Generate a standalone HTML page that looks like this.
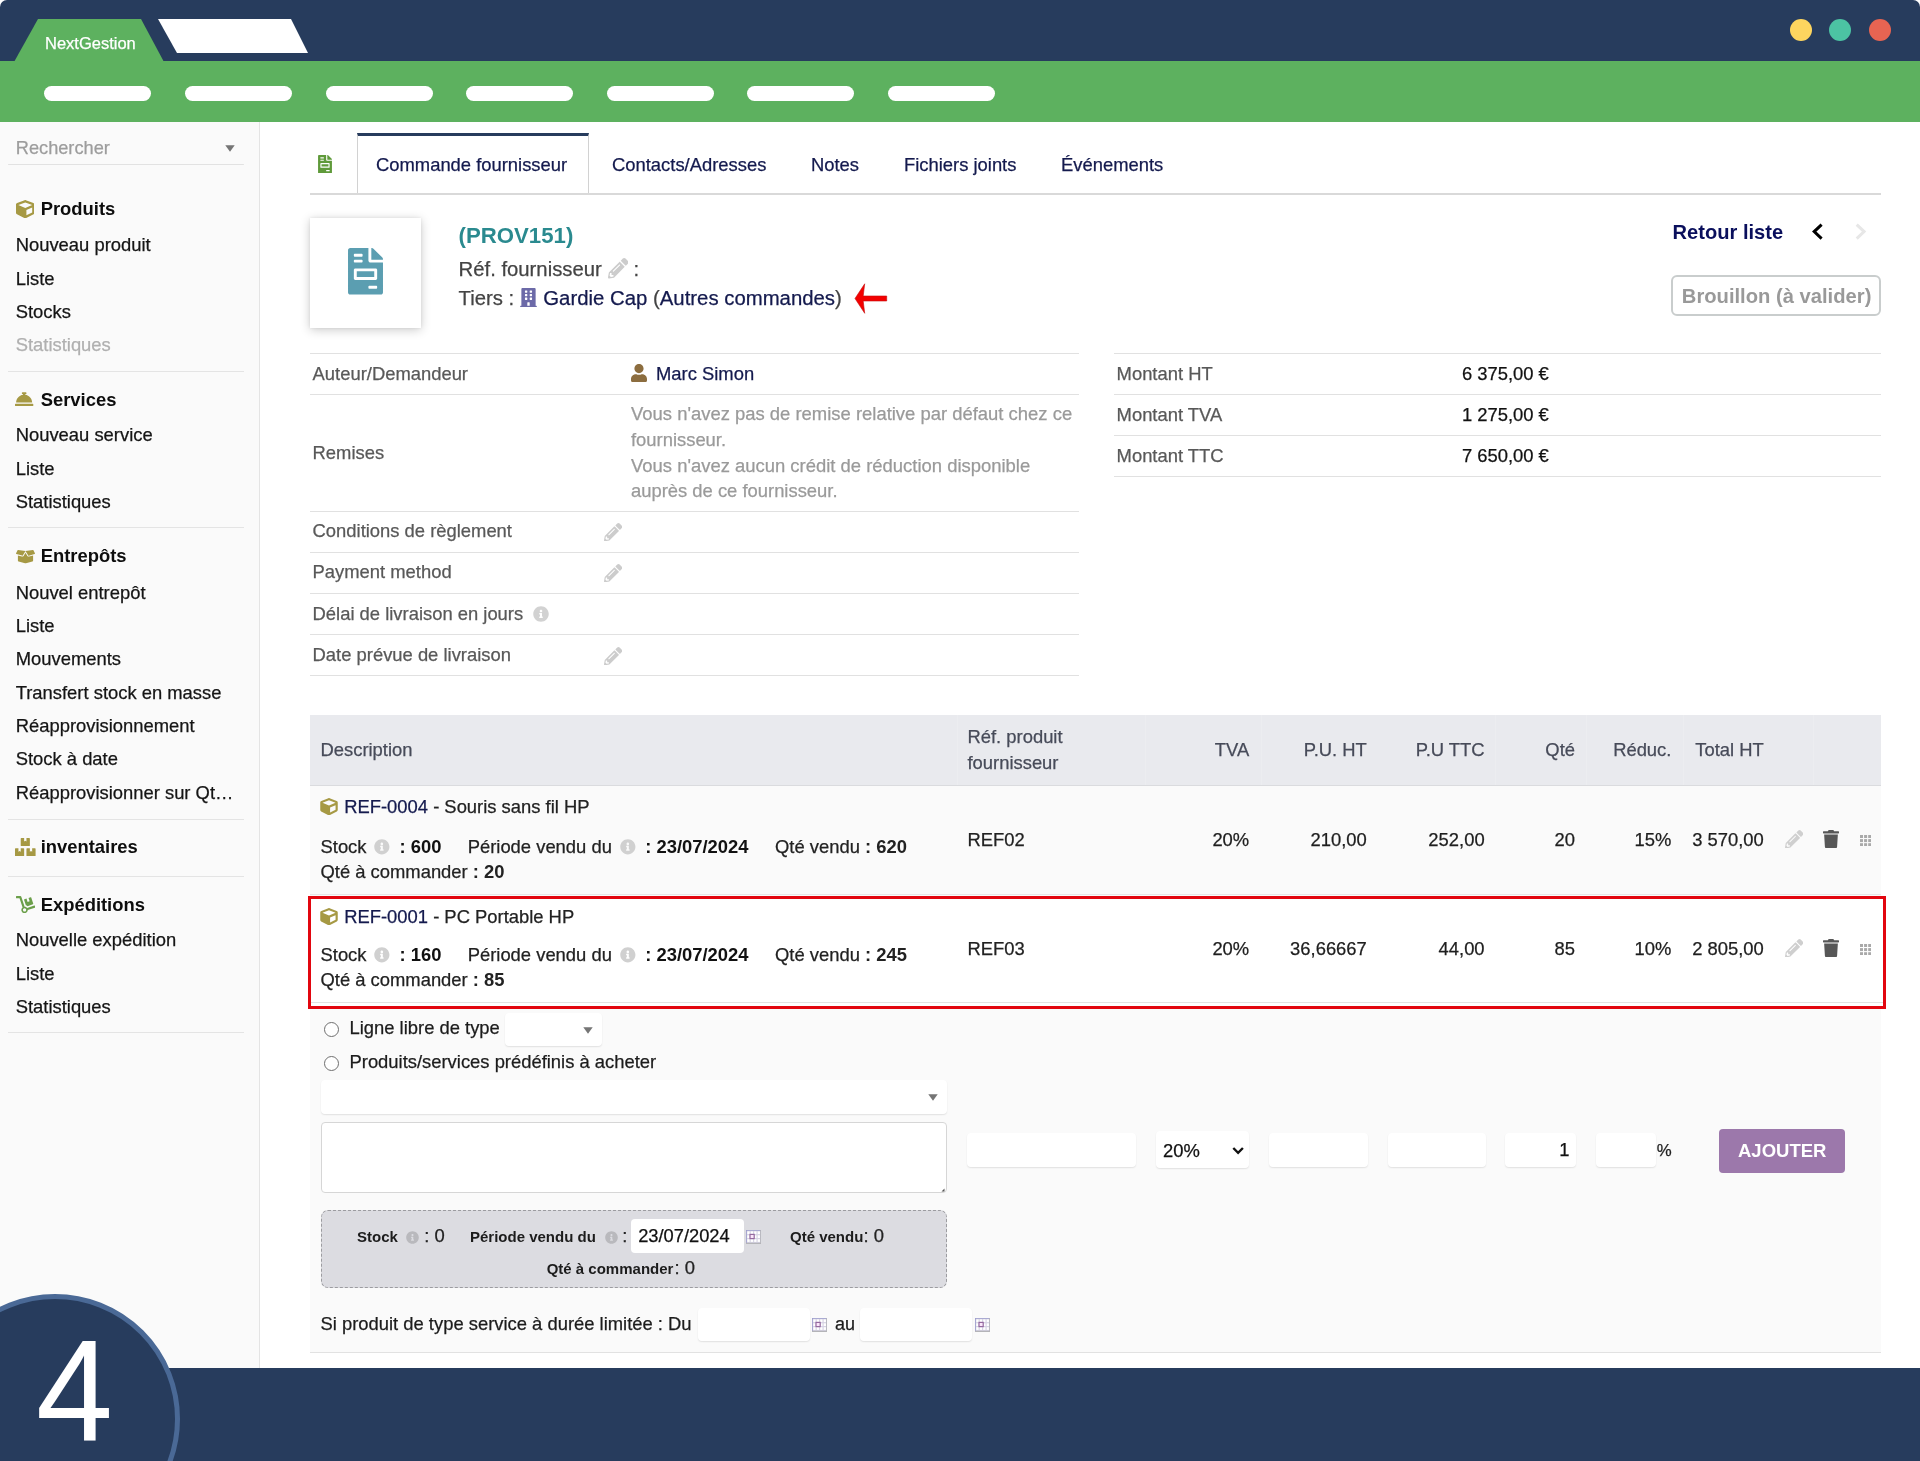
<!DOCTYPE html>
<html lang="fr">
<head>
<meta charset="utf-8">
<title>NextGestion - Commande fournisseur</title>
<style>
*{box-sizing:border-box;margin:0;padding:0}
html,body{width:1920px;height:1461px;overflow:hidden;background:#fff}
body{font-family:"Liberation Sans",Arial,sans-serif;font-size:18.4px;color:#222;position:relative}
.abs{position:absolute}
.t{-webkit-text-stroke:.25px;position:absolute;white-space:nowrap;line-height:24px;height:24px}
#win{will-change:transform;position:absolute;left:0;top:0;width:1920px;height:1461px;overflow:hidden;border-radius:7px 7px 0 0;background:#fff}
#navy{position:absolute;left:0;top:0;width:1920px;height:62px;background:#273c5d}
#green{position:absolute;left:0;top:61px;width:1920px;height:61px;background:#5db15f}
.pill{position:absolute;top:86px;height:15px;width:107px;border-radius:8px;background:#fff}
.dot{position:absolute;top:19px;width:22px;height:22px;border-radius:50%}
#side{position:absolute;left:0;top:122px;width:260px;height:1246px;background:#fafafa;border-right:1px solid #e4e4e4}
.sep{position:absolute;left:8px;width:236px;height:1px;background:#e2e2e2}
.sh{position:absolute;left:41px;font-weight:700;color:#111;white-space:nowrap;line-height:24px}
.si{position:absolute;left:16px;color:#1c1c1c;white-space:nowrap;line-height:24px}
.ico{position:absolute}
#bottom{position:absolute;left:0;top:1368px;width:1920px;height:93px;background:#273c5d}
#circle{position:absolute;left:-70.5px;top:1293.7px;width:250.6px;height:250.6px;border-radius:50%;background:#273c5d;border:5px solid #4a6996}
#four{position:absolute;left:36.3px;top:1311.2px;font-size:144.3px;line-height:160px;color:#fff;transform:scaleX(.959);transform-origin:0 0}
.hl{position:absolute;height:1px;background:#dcdcdc}
.lab{color:#595959}
.lnk{color:#141a4e}
.mut{color:#9a9a9a}
.b{font-weight:700}
.t.b,.t b{-webkit-text-stroke:0}
.r{text-align:right}
.inp{position:absolute;background:#fff;border-bottom:1px solid #e0e0e0;border-radius:3px}
</style>
</head>
<body>
<div id="win">
<div id="navy"></div>
<div id="green"></div>
<svg class="abs" style="left:0;top:0" width="340" height="62" viewBox="0 0 340 62">
<polygon points="14,62 38,19 141,19 164,62" fill="#5db15f"/>
<polygon points="158,19 291,19 308,53 177,53" fill="#fff"/>
</svg>
<div class="t" style="left:45px;top:31px;font-size:16.5px;color:#fff">NextGestion</div>
<div class="dot" style="left:1790px;background:#fdd55f"></div>
<div class="dot" style="left:1829px;background:#4cc3a3"></div>
<div class="dot" style="left:1869px;background:#e76452"></div>
<div class="pill" style="left:44px"></div>
<div class="pill" style="left:185px"></div>
<div class="pill" style="left:326px"></div>
<div class="pill" style="left:466px"></div>
<div class="pill" style="left:607px"></div>
<div class="pill" style="left:747px"></div>
<div class="pill" style="left:888px"></div>

<!-- SIDEBAR -->
<div id="side"></div>
<div class="t " style="left:15.8px;top:136px;line-height:24px;height:24px;font-size:18.2px;color:#9d9d9d">Rechercher</div>
<svg class="ico" style="left:225px;top:145px" width="10" height="7" viewBox="0 0 10 7"><path d="M0.300 0.300H9.700L5 6.700Z" fill="#757575"/></svg>
<div class="abs" style="left:8px;top:163.5px;width:236px;height:1.5px;background:#e2e2e2;border-radius:1px"></div>
<svg class="ico" style="left:15.5px;top:199.8px" width="18.5" height="18.5" viewBox="0 0 512 512" ><path fill="#a69944" d="M239.1 6.3l-208 78c-18.7 7-31.1 25-31.1 45v225.1c0 18.2 10.3 34.800 26.500 42.900l208 104c13.500 6.800 29.400 6.800 42.900 0l208-104c16.300-8.100 26.500-24.800 26.500-42.900V129.300c0-20-12.400-37.900-31.100-44.900l-208-78C262 2.200 250 2.200 239.100 6.300zM256 68.400l192 72v1.100l-192 78-192-78v-1.100l192-72zm32 356V275.500l160-65v133.900l-160 80z"/></svg><div class="t b" style="left:40.7px;top:196px;line-height:25px;height:25px;color:#0d0d0d">Produits</div>
<div class="t " style="left:15.7px;top:232px;line-height:25px;height:25px;color:#151515">Nouveau produit</div>
<div class="t " style="left:15.7px;top:266px;line-height:25px;height:25px;color:#151515">Liste</div>
<div class="t " style="left:15.7px;top:299px;line-height:25px;height:25px;color:#151515">Stocks</div>
<div class="t " style="left:15.7px;top:332px;line-height:25px;height:25px;color:#b0b0b0">Statistiques</div>
<div class="abs" style="left:8px;top:370.7px;width:236px;height:1.4px;background:#e4e4e4"></div>
<svg class="ico" style="left:15.4px;top:390px" width="18.3" height="18.3" viewBox="0 0 512 512" ><path fill="#a69944" d="M288 130.540V112h16c8.840 0 16-7.160 16-16V80c0-8.840-7.160-16-16-16h-96c-8.840 0-16 7.160-16 16v16c0 8.840 7.160 16 16 16h16v18.540C115.490 146.110 32 239.180 32 352h448c0-112.820-83.490-205.890-192-221.460zM496 384H16c-8.840 0-16 7.160-16 16v32c0 8.840 7.160 16 16 16h480c8.840 0 16-7.160 16-16v-32c0-8.840-7.160-16-16-16z"/></svg><div class="t b" style="left:40.7px;top:387px;line-height:25px;height:25px;color:#0d0d0d">Services</div>
<div class="t " style="left:15.7px;top:422px;line-height:25px;height:25px;color:#151515">Nouveau service</div>
<div class="t " style="left:15.7px;top:456px;line-height:25px;height:25px;color:#151515">Liste</div>
<div class="t " style="left:15.7px;top:489px;line-height:25px;height:25px;color:#151515">Statistiques</div>
<div class="abs" style="left:8px;top:527px;width:236px;height:1.4px;background:#e4e4e4"></div>
<svg class="ico" style="left:15.5px;top:549px" width="19" height="15.2" viewBox="0 0 640 512" ><path fill="#a69944" d="M425.700 256c-16.900 0-32.800-9-41.400-23.400L320 126l-64.200 106.600c-8.700 14.500-24.600 23.500-41.500 23.500-4.500 0-9-.6-13.300-1.900L64 215v178c0 14.700 10 27.500 24.200 31l216.200 54.100c10.200 2.500 20.900 2.500 31 0L551.800 424c14.200-3.600 24.200-16.400 24.200-31V215l-137 39.100c-4.300 1.300-8.800 1.900-13.300 1.900zm212.600-112.200L586.800 41c-3.100-6.200-9.800-9.800-16.700-8.900L320 64l91.700 152.100c3.800 6.300 11.400 9.300 18.500 7.300l197.900-56.500c9.900-2.900 14.700-13.900 10.200-23.100zM53.200 41L1.700 143.800c-4.600 9.200.3 20.200 10.100 23l197.900 56.500c7.100 2 14.700-1 18.500-7.300L320 64 69.800 32.100c-6.900-.8-13.500 2.700-16.600 8.900z"/></svg><div class="t b" style="left:40.7px;top:543px;line-height:25px;height:25px;color:#0d0d0d">Entrepôts</div>
<div class="t " style="left:15.7px;top:580px;line-height:25px;height:25px;color:#151515">Nouvel entrepôt</div>
<div class="t " style="left:15.7px;top:613px;line-height:25px;height:25px;color:#151515">Liste</div>
<div class="t " style="left:15.7px;top:646px;line-height:25px;height:25px;color:#151515">Mouvements</div>
<div class="t " style="left:15.7px;top:680px;line-height:25px;height:25px;color:#151515">Transfert stock en masse</div>
<div class="t " style="left:15.7px;top:713px;line-height:25px;height:25px;color:#151515">Réapprovisionnement</div>
<div class="t " style="left:15.7px;top:746px;line-height:25px;height:25px;color:#151515">Stock à date</div>
<div class="t " style="left:15.7px;top:780px;line-height:25px;height:25px;color:#151515">Réapprovisionner sur Qt…</div>
<div class="abs" style="left:8px;top:818.5px;width:236px;height:1.4px;background:#e4e4e4"></div>
<svg class="ico" style="left:15.4px;top:837.7px" width="20.6" height="18.3" viewBox="0 0 576 512" ><path fill="#a69944" d="M560 288h-80v96l-32-21.300-32 21.300v-96h-80c-8.800 0-16 7.200-16 16v192c0 8.800 7.200 16 16 16h224c8.800 0 16-7.200 16-16V304c0-8.800-7.200-16-16-16zm-384-64h224c8.800 0 16-7.200 16-16V16c0-8.800-7.200-16-16-16h-80v96l-32-21.300L256 96V0h-80c-8.800 0-16 7.200-16 16v192c0 8.800 7.200 16 16 16zm64 64h-80v96l-32-21.300L96 384v-96H16c-8.800 0-16 7.200-16 16v192c0 8.800 7.200 16 16 16h224c8.800 0 16-7.200 16-16V304c0-8.800-7.200-16-16-16z"/></svg><div class="t b" style="left:40.7px;top:834px;line-height:25px;height:25px;color:#0d0d0d">inventaires</div>
<div class="abs" style="left:8px;top:875.6px;width:236px;height:1.4px;background:#e4e4e4"></div>
<svg class="ico" style="left:15.6px;top:896.1px" width="19.3" height="17.2" viewBox="0 0 576 512" ><path fill="#6b9f4a" d="M294.200 277.700c18 5 34.700 13.400 49.500 24.700l161.500-53.800c8.400-2.800 12.900-11.900 10.100-20.200L454.900 47.200c-2.800-8.400-11.900-12.900-20.200-10.100l-61.100 20.400 33.100 99.400L346 177l-33.100-99.400-61.600 20.500c-8.400 2.800-12.900 11.900-10.100 20.200l53 159.400zm281 48.700L565 296c-2.800-8.400-11.900-12.900-20.200-10.100l-213.500 71.200c-17.200-22-43.600-36.400-73.500-37L158.400 21.900C154 8.800 141.800 0 128 0H16C7.200 0 0 7.200 0 16v32c0 8.800 7.200 16 16 16h88.900l92.200 276.700c-26.100 20.400-41.700 53.600-36 90.500 6.100 39.400 37.900 72.300 77.300 79.200 60.200 10.700 112.300-34.800 113.400-92.600l213.300-71.200c8.300-2.800 12.900-11.800 10.100-20.200zM256 464c-26.500 0-48-21.500-48-48s21.500-48 48-48 48 21.500 48 48-21.500 48-48 48z"/></svg><div class="t b" style="left:40.7px;top:892px;line-height:25px;height:25px;color:#0d0d0d">Expéditions</div>
<div class="t " style="left:15.7px;top:927px;line-height:25px;height:25px;color:#151515">Nouvelle expédition</div>
<div class="t " style="left:15.7px;top:961px;line-height:25px;height:25px;color:#151515">Liste</div>
<div class="t " style="left:15.7px;top:994px;line-height:25px;height:25px;color:#151515">Statistiques</div>
<div class="abs" style="left:8px;top:1032px;width:236px;height:1.4px;background:#e4e4e4"></div>


<!-- MAIN -->
<div class="abs" style="left:356.5px;top:133px;width:232.5px;height:61px;background:#fff;border-left:1px solid #d2d2d2;border-right:1px solid #d2d2d2;border-top:3.5px solid #273c5d"></div>
<div class="abs" style="left:310px;top:193px;width:1571px;height:1.7px;background:#d9d9d9"></div>
<svg class="ico" style="left:317.5px;top:154.7px" width="14" height="18.5" viewBox="0 0 384 512" ><path fill="#5f9a3a" d="M288 256H96v64h192v-64zm89-151L279.100 7c-4.500-4.500-10.600-7-17-7H256v128h128v-6.100c0-6.300-2.500-12.400-7-16.900zm-153 31V0H24C10.700 0 0 10.700 0 24v464c0 13.300 10.700 24 24 24h336c13.300 0 24-10.700 24-24V160H248c-13.200 0-24-10.800-24-24zM64 72c0-4.420 3.580-8 8-8h80c4.420 0 8 3.580 8 8v16c0 4.420-3.580 8-8 8H72c-4.420 0-8-3.580-8-8V72zm0 64c0-4.420 3.580-8 8-8h80c4.420 0 8 3.580 8 8v16c0 4.420-3.580 8-8 8H72c-4.420 0-8-3.580-8-8v-16zm256 304c0 4.420-3.580 8-8 8h-80c-4.420 0-8-3.580-8-8v-16c0-4.420 3.580-8 8-8h80c4.420 0 8 3.580 8 8v16zm0-200v96c0 8.840-7.160 16-16 16H80c-8.840 0-16-7.160-16-16v-96c0-8.840 7.160-16 16-16h224c8.840 0 16 7.160 16 16z"/></svg><div class="t lnk" style="left:376px;top:152px;line-height:25px;height:25px;">Commande fournisseur</div>
<div class="t lnk" style="left:612px;top:152px;line-height:25px;height:25px;">Contacts/Adresses</div>
<div class="t lnk" style="left:811px;top:152px;line-height:25px;height:25px;">Notes</div>
<div class="t lnk" style="left:904px;top:152px;line-height:25px;height:25px;">Fichiers joints</div>
<div class="t lnk" style="left:1061px;top:152px;line-height:25px;height:25px;">Événements</div>
<div class="abs" style="left:310.4px;top:217.7px;width:110.4px;height:110px;background:#fff;box-shadow:0 2px 10px rgba(0,0,0,.2),0 0 3px rgba(0,0,0,.08)"></div>
<svg class="ico" style="left:348px;top:248.3px" width="35" height="46.6" viewBox="0 0 384 512" ><path fill="#5b9eb1" d="M288 256H96v64h192v-64zm89-151L279.100 7c-4.500-4.500-10.600-7-17-7H256v128h128v-6.100c0-6.300-2.500-12.400-7-16.900zm-153 31V0H24C10.700 0 0 10.700 0 24v464c0 13.300 10.700 24 24 24h336c13.300 0 24-10.700 24-24V160H248c-13.200 0-24-10.800-24-24zM64 72c0-4.420 3.580-8 8-8h80c4.420 0 8 3.580 8 8v16c0 4.420-3.580 8-8 8H72c-4.420 0-8-3.580-8-8V72zm0 64c0-4.420 3.580-8 8-8h80c4.420 0 8 3.580 8 8v16c0 4.420-3.580 8-8 8H72c-4.420 0-8-3.580-8-8v-16zm256 304c0 4.420-3.580 8-8 8h-80c-4.420 0-8-3.580-8-8v-16c0-4.420 3.580-8 8-8h80c4.420 0 8 3.580 8 8v16zm0-200v96c0 8.840-7.160 16-16 16H80c-8.840 0-16-7.160-16-16v-96c0-8.840 7.160-16 16-16h224c8.840 0 16 7.160 16 16z"/></svg><div class="t b" style="left:458.6px;top:221px;line-height:29px;height:29px;font-size:22.2px;color:#2a8a8f">(PROV151)</div>
<div class="t " style="left:458.6px;top:256px;line-height:26px;height:26px;font-size:20.3px;color:#444">Réf. fournisseur</div>
<svg class="ico" style="left:607.5px;top:258.4px" width="20.5" height="20.5" viewBox="0 0 512 512" ><path fill="#cccccc" d="M497.900 142.100l-46.100 46.100c-4.700 4.700-12.300 4.700-17 0l-111-111c-4.700-4.700-4.700-12.300 0-17l46.100-46.100c18.700-18.700 49.100-18.700 67.900 0l60.100 60.100c18.800 18.700 18.800 49.100 0 67.900zM284.200 99.800L21.600 362.400.4 483.900c-2.900 16.400 11.400 30.600 27.800 27.800l121.500-21.300 262.600-262.600c4.700-4.700 4.700-12.300 0-17l-111-111c-4.800-4.700-12.400-4.700-17.100 0zM124.100 339.900c-5.500-5.500-5.500-14.300 0-19.800l154-154c5.500-5.500 14.300-5.500 19.800 0s5.500 14.300 0 19.800l-154 154c-5.500 5.500-14.300 5.500-19.800 0zM88 424h48v36.300l-64.500 11.300-31.100-31.100L51.700 376H88v48z"/></svg><div class="t " style="left:633.5px;top:256px;line-height:26px;height:26px;font-size:20.3px;color:#444">:</div>
<div class="t " style="left:458.6px;top:285px;line-height:26px;height:26px;font-size:20.3px;color:#444">Tiers :</div>
<svg class="ico" style="left:520.3px;top:287.5px" width="17" height="19" viewBox="0 0 448 512" ><path fill="#6c6aa8" d="M436 480h-20V24c0-13.255-10.745-24-24-24H56C42.745 0 32 10.745 32 24v456H12c-6.627 0-12 5.373-12 12v20h448v-20c0-6.627-5.373-12-12-12zM128 76c0-6.627 5.373-12 12-12h40c6.627 0 12 5.373 12 12v40c0 6.627-5.373 12-12 12h-40c-6.627 0-12-5.373-12-12V76zm0 96c0-6.627 5.373-12 12-12h40c6.627 0 12 5.373 12 12v40c0 6.627-5.373 12-12 12h-40c-6.627 0-12-5.373-12-12v-40zm52 148h-40c-6.627 0-12-5.373-12-12v-40c0-6.627 5.373-12 12-12h40c6.627 0 12 5.373 12 12v40c0 6.627-5.373 12-12 12zm76 160h-64v-84c0-6.627 5.373-12 12-12h40c6.627 0 12 5.373 12 12v84zm64-172c0 6.627-5.373 12-12 12h-40c-6.627 0-12-5.373-12-12v-40c0-6.627 5.373-12 12-12h40c6.627 0 12 5.373 12 12v40zm0-96c0 6.627-5.373 12-12 12h-40c-6.627 0-12-5.373-12-12v-40c0-6.627 5.373-12 12-12h40c6.627 0 12 5.373 12 12v40zm0-96c0 6.627-5.373 12-12 12h-40c-6.627 0-12-5.373-12-12V76c0-6.627 5.373-12 12-12h40c6.627 0 12 5.373 12 12v40z"/></svg><div class="t " style="left:543.3px;top:285px;line-height:26px;height:26px;font-size:20.35px;color:#444"><span class="lnk">Gardie Cap</span> (<span class="lnk">Autres commandes</span>)</div>
<svg class="ico" style="left:850px;top:280px" width="42" height="38" viewBox="850 280 42 38"><path d="M855 298.500L864.700 283.800L863.200 296L886.700 296L886.700 301L863.200 301L864.700 313.300Z" fill="#f30000" stroke="#c40d0d" stroke-width="0.600"/></svg>
<div class="t b" style="left:1672.6px;top:219px;line-height:26px;height:26px;font-size:20.1px;color:#0a0f5c">Retour liste</div>
<svg class="ico" style="left:1808px;top:220px" width="64" height="24" viewBox="1808 220 64 24"><path d="M1821.600 224.600L1814.200 231.600L1821.600 238.600" fill="none" stroke="#000" stroke-width="3"/><path d="M1856.700 224.600L1864.100 231.600L1856.700 238.600" fill="none" stroke="#e7e7e7" stroke-width="3"/></svg>
<div class="abs" style="left:1671.2px;top:275px;width:209.8px;height:40.6px;border:2px solid #c9cdcd;border-radius:6px;background:#fff"></div>
<div class="t b" style="left:1681.8px;top:283px;line-height:26px;height:26px;font-size:20.2px;color:#999">Brouillon (à valider)</div>
<div class="hl" style="left:310px;top:352.79999999999995px;width:769px;background:#e1e1e1;height:1.3px"></div>
<div class="hl" style="left:310px;top:393.9px;width:769px;background:#e1e1e1;height:1.3px"></div>
<div class="hl" style="left:310px;top:510.59999999999997px;width:769px;background:#e1e1e1;height:1.3px"></div>
<div class="hl" style="left:310px;top:551.6999999999999px;width:769px;background:#e1e1e1;height:1.3px"></div>
<div class="hl" style="left:310px;top:592.5px;width:769px;background:#e1e1e1;height:1.3px"></div>
<div class="hl" style="left:310px;top:633.8px;width:769px;background:#e1e1e1;height:1.3px"></div>
<div class="hl" style="left:310px;top:675.0px;width:769px;background:#e1e1e1;height:1.3px"></div>
<div class="t lab" style="left:312.6px;top:361px;line-height:25px;height:25px;">Auteur/Demandeur</div>
<svg class="ico" style="left:631.3px;top:364px" width="16" height="18.3" viewBox="0 0 448 512" ><path fill="#8c6d3f" d="M224 256c70.700 0 128-57.300 128-128S294.700 0 224 0 96 57.300 96 128s57.300 128 128 128zm89.600 32h-16.700c-22.200 10.200-46.900 16-72.900 16s-50.600-5.800-72.900-16h-16.700C60.200 288 0 348.200 0 422.400V464c0 26.500 21.500 48 48 48h352c26.500 0 48-21.500 48-48v-41.600c0-74.200-60.200-134.400-134.400-134.400z"/></svg><div class="t lnk" style="left:656px;top:361px;line-height:25px;height:25px;">Marc Simon</div>
<div class="t lab" style="left:312.6px;top:440px;line-height:25px;height:25px;">Remises</div>
<div class="t mut" style="left:631px;top:401px;line-height:25px;height:25px;font-size:18.45px;">Vous n'avez pas de remise relative par défaut chez ce</div>
<div class="t mut" style="left:631px;top:427px;line-height:25px;height:25px;">fournisseur.</div>
<div class="t mut" style="left:631px;top:453px;line-height:25px;height:25px;font-size:18.45px;">Vous n'avez aucun crédit de réduction disponible</div>
<div class="t mut" style="left:631px;top:478px;line-height:25px;height:25px;">auprès de ce fournisseur.</div>
<div class="t lab" style="left:312.6px;top:518px;line-height:25px;height:25px;">Conditions de règlement</div>
<svg class="ico" style="left:604.1px;top:522.8px" width="18.3" height="18.3" viewBox="0 0 512 512" ><path fill="#cccccc" d="M497.900 142.100l-46.100 46.100c-4.700 4.700-12.300 4.700-17 0l-111-111c-4.700-4.700-4.700-12.300 0-17l46.100-46.100c18.700-18.700 49.100-18.700 67.900 0l60.100 60.100c18.800 18.700 18.800 49.100 0 67.900zM284.200 99.800L21.600 362.400.4 483.900c-2.900 16.400 11.400 30.600 27.800 27.800l121.500-21.300 262.600-262.600c4.700-4.700 4.700-12.300 0-17l-111-111c-4.800-4.700-12.400-4.700-17.100 0zM124.100 339.900c-5.500-5.500-5.500-14.300 0-19.800l154-154c5.500-5.500 14.300-5.500 19.800 0s5.500 14.300 0 19.800l-154 154c-5.500 5.500-14.300 5.500-19.800 0zM88 424h48v36.300l-64.500 11.300-31.100-31.100L51.700 376H88v48z"/></svg><div class="t lab" style="left:312.6px;top:559px;line-height:25px;height:25px;">Payment method</div>
<svg class="ico" style="left:604.1px;top:564px" width="18.3" height="18.3" viewBox="0 0 512 512" ><path fill="#cccccc" d="M497.900 142.100l-46.100 46.100c-4.700 4.700-12.300 4.700-17 0l-111-111c-4.700-4.700-4.700-12.300 0-17l46.100-46.100c18.700-18.700 49.100-18.700 67.900 0l60.100 60.100c18.800 18.700 18.800 49.100 0 67.900zM284.200 99.800L21.600 362.400.4 483.900c-2.900 16.400 11.400 30.600 27.800 27.800l121.500-21.300 262.600-262.600c4.700-4.700 4.700-12.300 0-17l-111-111c-4.800-4.700-12.400-4.700-17.100 0zM124.100 339.900c-5.500-5.500-5.500-14.300 0-19.800l154-154c5.500-5.500 14.300-5.500 19.800 0s5.500 14.300 0 19.800l-154 154c-5.500 5.500-14.300 5.500-19.800 0zM88 424h48v36.300l-64.500 11.300-31.100-31.100L51.700 376H88v48z"/></svg><div class="t lab" style="left:312.6px;top:601px;line-height:25px;height:25px;">Délai de livraison en jours</div>
<svg class="ico" style="left:533.2px;top:606.2px" width="16" height="16" viewBox="0 0 512 512" ><path fill="#d2d2d2" d="M256 8C119.043 8 8 119.083 8 256c0 136.997 111.043 248 248 248s248-111.003 248-248C504 119.083 392.957 8 256 8zm0 110c23.196 0 42 18.804 42 42s-18.804 42-42 42-42-18.804-42-42 18.804-42 42-42zm56 254c0 6.627-5.373 12-12 12h-88c-6.627 0-12-5.373-12-12v-24c0-6.627 5.373-12 12-12h12v-64h-12c-6.627 0-12-5.373-12-12v-24c0-6.627 5.373-12 12-12h64c6.627 0 12 5.373 12 12v100h12c6.627 0 12 5.373 12 12v24z"/></svg><div class="t lab" style="left:312.6px;top:642px;line-height:25px;height:25px;">Date prévue de livraison</div>
<svg class="ico" style="left:604.1px;top:646.5px" width="18.3" height="18.3" viewBox="0 0 512 512" ><path fill="#cccccc" d="M497.900 142.100l-46.100 46.100c-4.700 4.700-12.300 4.700-17 0l-111-111c-4.700-4.700-4.700-12.300 0-17l46.100-46.100c18.700-18.700 49.100-18.700 67.900 0l60.100 60.100c18.800 18.700 18.800 49.100 0 67.900zM284.200 99.800L21.600 362.400.4 483.900c-2.900 16.400 11.400 30.600 27.800 27.800l121.500-21.300 262.600-262.600c4.700-4.700 4.700-12.300 0-17l-111-111c-4.800-4.700-12.400-4.700-17.100 0zM124.100 339.900c-5.500-5.500-5.500-14.300 0-19.800l154-154c5.500-5.500 14.300-5.500 19.800 0s5.500 14.300 0 19.800l-154 154c-5.500 5.500-14.300 5.500-19.800 0zM88 424h48v36.300l-64.500 11.300-31.100-31.100L51.700 376H88v48z"/></svg><div class="hl" style="left:1113.7px;top:352.9px;width:767.3px;background:#e1e1e1;height:1.3px"></div>
<div class="hl" style="left:1113.7px;top:393.9px;width:767.3px;background:#e1e1e1;height:1.3px"></div>
<div class="hl" style="left:1113.7px;top:434.9px;width:767.3px;background:#e1e1e1;height:1.3px"></div>
<div class="hl" style="left:1113.7px;top:475.9px;width:767.3px;background:#e1e1e1;height:1.3px"></div>
<div class="t lab" style="left:1116.6px;top:361px;line-height:25px;height:25px;">Montant HT</div>
<div class="t lab" style="left:1116.6px;top:402px;line-height:25px;height:25px;">Montant TVA</div>
<div class="t lab" style="left:1116.6px;top:443px;line-height:25px;height:25px;">Montant TTC</div>
<div class="t " style="right:371.20000000000005px;top:361px;line-height:25px;height:25px;color:#111">6 375,00 €</div>
<div class="t " style="right:371.20000000000005px;top:402px;line-height:25px;height:25px;color:#111">1 275,00 €</div>
<div class="t " style="right:371.20000000000005px;top:443px;line-height:25px;height:25px;color:#111">7 650,00 €</div>
<div class="abs" style="left:310px;top:715px;width:1571.2px;height:70.5px;background:#e9eaee"></div>
<div class="abs" style="left:310px;top:785.5px;width:1571.2px;height:110px;background:#fafafa"></div>
<div class="abs" style="left:310px;top:1008px;width:1571.2px;height:344px;background:#fafafa"></div>
<div class="hl" style="left:310px;top:785px;width:1571.2px;background:#dadbde;height:1px"></div>
<div class="hl" style="left:310px;top:894px;width:1571.2px;background:#e6e6e6;height:1px"></div>
<div class="hl" style="left:310px;top:1351.5px;width:1571.2px;background:#e2e2e2;height:1.3px"></div>
<div class="abs" style="left:957px;top:715px;width:1px;height:70px;background:rgba(255,255,255,.15)"></div>
<div class="abs" style="left:1145px;top:715px;width:1px;height:70px;background:rgba(255,255,255,.15)"></div>
<div class="abs" style="left:1260.5px;top:715px;width:1px;height:70px;background:rgba(255,255,255,.15)"></div>
<div class="abs" style="left:1495px;top:715px;width:1px;height:70px;background:rgba(255,255,255,.15)"></div>
<div class="abs" style="left:1586px;top:715px;width:1px;height:70px;background:rgba(255,255,255,.15)"></div>
<div class="abs" style="left:1682.5px;top:715px;width:1px;height:70px;background:rgba(255,255,255,.15)"></div>
<div class="abs" style="left:1813px;top:715px;width:1px;height:70px;background:rgba(255,255,255,.15)"></div>
<div class="t " style="left:320.5px;top:737px;line-height:25px;height:25px;color:#474b59">Description</div>
<div class="t " style="left:967.5px;top:724px;line-height:25px;height:25px;color:#474b59">Réf. produit</div>
<div class="t " style="left:967.5px;top:750px;line-height:25px;height:25px;color:#474b59">fournisseur</div>
<div class="t " style="right:670.8px;top:737px;line-height:25px;height:25px;color:#474b59">TVA</div>
<div class="t " style="right:553.2px;top:737px;line-height:25px;height:25px;color:#474b59">P.U. HT</div>
<div class="t " style="right:435.4000000000001px;top:737px;line-height:25px;height:25px;color:#474b59">P.U TTC</div>
<div class="t " style="right:345px;top:737px;line-height:25px;height:25px;color:#474b59">Qté</div>
<div class="t " style="right:248.5999999999999px;top:737px;line-height:25px;height:25px;color:#474b59">Réduc.</div>
<div class="t " style="right:156.20000000000005px;top:737px;line-height:25px;height:25px;color:#474b59">Total HT</div>
<svg class="ico" style="left:320px;top:797.8px" width="18" height="17.5" viewBox="0 0 512 512" ><path fill="#a69944" d="M239.1 6.3l-208 78c-18.7 7-31.1 25-31.1 45v225.1c0 18.2 10.3 34.800 26.500 42.900l208 104c13.500 6.800 29.400 6.800 42.900 0l208-104c16.300-8.100 26.500-24.800 26.500-42.900V129.300c0-20-12.400-37.900-31.100-44.900l-208-78C262 2.200 250 2.200 239.100 6.300zM256 68.400l192 72v1.100l-192 78-192-78v-1.100l192-72zm32 356V275.500l160-65v133.900l-160 80z"/></svg><div class="t " style="left:344.2px;top:794px;line-height:25px;height:25px;color:#222"><span class="lnk">REF-0004</span> - Souris sans fil HP</div>
<div class="t " style="left:320.5px;top:834px;line-height:25px;height:25px;color:#222">Stock</div>
<svg class="ico" style="left:374.2px;top:839.4px" width="15.7" height="15.7" viewBox="0 0 512 512" ><path fill="#d0d0d0" d="M256 8C119.043 8 8 119.083 8 256c0 136.997 111.043 248 248 248s248-111.003 248-248C504 119.083 392.957 8 256 8zm0 110c23.196 0 42 18.804 42 42s-18.804 42-42 42-42-18.804-42-42 18.804-42 42-42zm56 254c0 6.627-5.373 12-12 12h-88c-6.627 0-12-5.373-12-12v-24c0-6.627 5.373-12 12-12h12v-64h-12c-6.627 0-12-5.373-12-12v-24c0-6.627 5.373-12 12-12h64c6.627 0 12 5.373 12 12v100h12c6.627 0 12 5.373 12 12v24z"/></svg><div class="t " style="left:399.6px;top:834px;line-height:25px;height:25px;color:#111"><b>: 600</b></div>
<div class="t " style="left:467.7px;top:834px;line-height:25px;height:25px;color:#222">Période vendu du</div>
<svg class="ico" style="left:620px;top:839.4px" width="15.7" height="15.7" viewBox="0 0 512 512" ><path fill="#d0d0d0" d="M256 8C119.043 8 8 119.083 8 256c0 136.997 111.043 248 248 248s248-111.003 248-248C504 119.083 392.957 8 256 8zm0 110c23.196 0 42 18.804 42 42s-18.804 42-42 42-42-18.804-42-42 18.804-42 42-42zm56 254c0 6.627-5.373 12-12 12h-88c-6.627 0-12-5.373-12-12v-24c0-6.627 5.373-12 12-12h12v-64h-12c-6.627 0-12-5.373-12-12v-24c0-6.627 5.373-12 12-12h64c6.627 0 12 5.373 12 12v100h12c6.627 0 12 5.373 12 12v24z"/></svg><div class="t " style="left:645.2px;top:834px;line-height:25px;height:25px;color:#111"><b>: 23/07/2024</b></div>
<div class="t " style="left:775px;top:834px;line-height:25px;height:25px;color:#222">Qté vendu <b>: 620</b></div>
<div class="t " style="left:320.5px;top:859px;line-height:25px;height:25px;color:#222">Qté à commander <b>: 20</b></div>
<div class="t " style="left:967.5px;top:827px;line-height:25px;height:25px;color:#222">REF02</div>
<div class="t " style="right:670.8px;top:827px;line-height:25px;height:25px;color:#1e1e1e">20%</div>
<div class="t " style="right:553.2px;top:827px;line-height:25px;height:25px;color:#1e1e1e">210,00</div>
<div class="t " style="right:435.4000000000001px;top:827px;line-height:25px;height:25px;color:#1e1e1e">252,00</div>
<div class="t " style="right:345px;top:827px;line-height:25px;height:25px;color:#1e1e1e">20</div>
<div class="t " style="right:248.5999999999999px;top:827px;line-height:25px;height:25px;color:#1e1e1e">15%</div>
<div class="t " style="right:156.20000000000005px;top:827px;line-height:25px;height:25px;color:#1e1e1e">3 570,00</div>
<svg class="ico" style="left:1784.5px;top:830px" width="18.4" height="18.4" viewBox="0 0 512 512" ><path fill="#cfcfcf" d="M497.900 142.100l-46.100 46.100c-4.700 4.700-12.300 4.700-17 0l-111-111c-4.700-4.700-4.700-12.300 0-17l46.100-46.100c18.700-18.700 49.100-18.700 67.900 0l60.100 60.100c18.800 18.700 18.800 49.100 0 67.900zM284.200 99.800L21.600 362.400.4 483.900c-2.900 16.400 11.400 30.600 27.800 27.800l121.500-21.300 262.600-262.600c4.700-4.700 4.700-12.300 0-17l-111-111c-4.800-4.700-12.400-4.700-17.100 0zM124.100 339.900c-5.500-5.500-5.500-14.300 0-19.800l154-154c5.500-5.500 14.300-5.500 19.800 0s5.500 14.300 0 19.800l-154 154c-5.500 5.500-14.300 5.500-19.800 0zM88 424h48v36.300l-64.500 11.300-31.100-31.100L51.700 376H88v48z"/></svg><svg class="ico" style="left:1823px;top:830px" width="16" height="18.3" viewBox="0 0 448 512" ><path fill="#575757" d="M432 32H312l-9.400-18.700A24 24 0 0 0 281.100 0H166.800a23.720 23.720 0 0 0-21.400 13.300L136 32H16A16 16 0 0 0 0 48v32a16 16 0 0 0 16 16h416a16 16 0 0 0 16-16V48a16 16 0 0 0-16-16zM53.200 467a48 48 0 0 0 47.900 45h245.800a48 48 0 0 0 47.900-45L416 128H32z"/></svg><svg class="ico" style="left:1860px;top:835px" width="11.2" height="11.2" viewBox="0 0 11.2 11.2"><rect x="0.0" y="0.0" width="3" height="3" fill="#a9a9a9"/><rect x="0.0" y="4.1" width="3" height="3" fill="#a9a9a9"/><rect x="0.0" y="8.2" width="3" height="3" fill="#a9a9a9"/><rect x="4.1" y="0.0" width="3" height="3" fill="#a9a9a9"/><rect x="4.1" y="4.1" width="3" height="3" fill="#a9a9a9"/><rect x="4.1" y="8.2" width="3" height="3" fill="#a9a9a9"/><rect x="8.2" y="0.0" width="3" height="3" fill="#a9a9a9"/><rect x="8.2" y="4.1" width="3" height="3" fill="#a9a9a9"/><rect x="8.2" y="8.2" width="3" height="3" fill="#a9a9a9"/></svg>
<div class="abs" style="left:308px;top:895.8px;width:1578px;height:113.2px;border:3px solid #e2060f;background:#fff"></div>
<div class="hl" style="left:311px;top:1001.6px;width:1572px;background:#e2e2e2;height:1.2px"></div>
<svg class="ico" style="left:320px;top:907.8px" width="18" height="17.5" viewBox="0 0 512 512" ><path fill="#a69944" d="M239.1 6.3l-208 78c-18.7 7-31.1 25-31.1 45v225.1c0 18.2 10.3 34.800 26.500 42.900l208 104c13.500 6.800 29.400 6.800 42.900 0l208-104c16.300-8.100 26.500-24.800 26.500-42.900V129.300c0-20-12.400-37.900-31.100-44.900l-208-78C262 2.200 250 2.200 239.100 6.300zM256 68.400l192 72v1.100l-192 78-192-78v-1.100l192-72zm32 356V275.500l160-65v133.900l-160 80z"/></svg><div class="t " style="left:344.2px;top:904px;line-height:25px;height:25px;color:#222"><span class="lnk">REF-0001</span> - PC Portable HP</div>
<div class="t " style="left:320.5px;top:942px;line-height:25px;height:25px;color:#222">Stock</div>
<svg class="ico" style="left:374.2px;top:947.1px" width="15.7" height="15.7" viewBox="0 0 512 512" ><path fill="#d0d0d0" d="M256 8C119.043 8 8 119.083 8 256c0 136.997 111.043 248 248 248s248-111.003 248-248C504 119.083 392.957 8 256 8zm0 110c23.196 0 42 18.804 42 42s-18.804 42-42 42-42-18.804-42-42 18.804-42 42-42zm56 254c0 6.627-5.373 12-12 12h-88c-6.627 0-12-5.373-12-12v-24c0-6.627 5.373-12 12-12h12v-64h-12c-6.627 0-12-5.373-12-12v-24c0-6.627 5.373-12 12-12h64c6.627 0 12 5.373 12 12v100h12c6.627 0 12 5.373 12 12v24z"/></svg><div class="t " style="left:399.6px;top:942px;line-height:25px;height:25px;color:#111"><b>: 160</b></div>
<div class="t " style="left:467.7px;top:942px;line-height:25px;height:25px;color:#222">Période vendu du</div>
<svg class="ico" style="left:620px;top:947.1px" width="15.7" height="15.7" viewBox="0 0 512 512" ><path fill="#d0d0d0" d="M256 8C119.043 8 8 119.083 8 256c0 136.997 111.043 248 248 248s248-111.003 248-248C504 119.083 392.957 8 256 8zm0 110c23.196 0 42 18.804 42 42s-18.804 42-42 42-42-18.804-42-42 18.804-42 42-42zm56 254c0 6.627-5.373 12-12 12h-88c-6.627 0-12-5.373-12-12v-24c0-6.627 5.373-12 12-12h12v-64h-12c-6.627 0-12-5.373-12-12v-24c0-6.627 5.373-12 12-12h64c6.627 0 12 5.373 12 12v100h12c6.627 0 12 5.373 12 12v24z"/></svg><div class="t " style="left:645.2px;top:942px;line-height:25px;height:25px;color:#111"><b>: 23/07/2024</b></div>
<div class="t " style="left:775px;top:942px;line-height:25px;height:25px;color:#222">Qté vendu <b>: 245</b></div>
<div class="t " style="left:320.5px;top:967px;line-height:25px;height:25px;color:#222">Qté à commander <b>: 85</b></div>
<div class="t " style="left:967.5px;top:936px;line-height:25px;height:25px;color:#222">REF03</div>
<div class="t " style="right:670.8px;top:936px;line-height:25px;height:25px;color:#1e1e1e">20%</div>
<div class="t " style="right:553.2px;top:936px;line-height:25px;height:25px;color:#1e1e1e">36,66667</div>
<div class="t " style="right:435.4000000000001px;top:936px;line-height:25px;height:25px;color:#1e1e1e">44,00</div>
<div class="t " style="right:345px;top:936px;line-height:25px;height:25px;color:#1e1e1e">85</div>
<div class="t " style="right:248.5999999999999px;top:936px;line-height:25px;height:25px;color:#1e1e1e">10%</div>
<div class="t " style="right:156.20000000000005px;top:936px;line-height:25px;height:25px;color:#1e1e1e">2 805,00</div>
<svg class="ico" style="left:1784.5px;top:938.6px" width="18.4" height="18.4" viewBox="0 0 512 512" ><path fill="#cfcfcf" d="M497.900 142.100l-46.100 46.100c-4.700 4.700-12.300 4.700-17 0l-111-111c-4.700-4.700-4.700-12.300 0-17l46.100-46.100c18.700-18.700 49.100-18.700 67.900 0l60.100 60.100c18.800 18.700 18.800 49.100 0 67.900zM284.200 99.800L21.600 362.400.4 483.900c-2.900 16.400 11.400 30.600 27.800 27.800l121.500-21.300 262.600-262.600c4.700-4.700 4.700-12.300 0-17l-111-111c-4.800-4.700-12.400-4.700-17.100 0zM124.100 339.900c-5.500-5.500-5.500-14.300 0-19.800l154-154c5.500-5.500 14.300-5.500 19.800 0s5.500 14.300 0 19.800l-154 154c-5.500 5.500-14.300 5.500-19.800 0zM88 424h48v36.300l-64.500 11.300-31.100-31.100L51.700 376H88v48z"/></svg><svg class="ico" style="left:1823px;top:938.6px" width="16" height="18.3" viewBox="0 0 448 512" ><path fill="#575757" d="M432 32H312l-9.400-18.700A24 24 0 0 0 281.100 0H166.800a23.720 23.720 0 0 0-21.400 13.300L136 32H16A16 16 0 0 0 0 48v32a16 16 0 0 0 16 16h416a16 16 0 0 0 16-16V48a16 16 0 0 0-16-16zM53.200 467a48 48 0 0 0 47.900 45h245.800a48 48 0 0 0 47.900-45L416 128H32z"/></svg><svg class="ico" style="left:1860px;top:943.6px" width="11.2" height="11.2" viewBox="0 0 11.2 11.2"><rect x="0.0" y="0.0" width="3" height="3" fill="#a9a9a9"/><rect x="0.0" y="4.1" width="3" height="3" fill="#a9a9a9"/><rect x="0.0" y="8.2" width="3" height="3" fill="#a9a9a9"/><rect x="4.1" y="0.0" width="3" height="3" fill="#a9a9a9"/><rect x="4.1" y="4.1" width="3" height="3" fill="#a9a9a9"/><rect x="4.1" y="8.2" width="3" height="3" fill="#a9a9a9"/><rect x="8.2" y="0.0" width="3" height="3" fill="#a9a9a9"/><rect x="8.2" y="4.1" width="3" height="3" fill="#a9a9a9"/><rect x="8.2" y="8.2" width="3" height="3" fill="#a9a9a9"/></svg>
<div class="abs" style="left:324.4px;top:1022.2px;width:15px;height:15px;border:1.4px solid #6f6f6f;border-radius:50%;background:#fff"></div>
<div class="t " style="left:349.5px;top:1015px;line-height:25px;height:25px;color:#1c1c1c">Ligne libre de type</div>
<div class="abs" style="left:505px;top:1013px;width:97px;height:33px;background:#fff;border-radius:4px;box-shadow:0 1px 1.5px rgba(0,0,0,.1)"></div>
<svg class="ico" style="left:583.2px;top:1026.7px" width="10" height="7" viewBox="0 0 10 7"><path d="M0.300 0.300H9.700L5 6.700Z" fill="#757575"/></svg>
<div class="abs" style="left:324.4px;top:1055.9px;width:15px;height:15px;border:1.4px solid #6f6f6f;border-radius:50%;background:#fff"></div>
<div class="t " style="left:349.5px;top:1049px;line-height:25px;height:25px;color:#1c1c1c">Produits/services prédéfinis à acheter</div>
<div class="abs" style="left:320.5px;top:1080px;width:626.3px;height:33.6px;background:#fff;border-radius:4px;box-shadow:0 1px 1.5px rgba(0,0,0,.1)"></div>
<svg class="ico" style="left:928px;top:1094px" width="10" height="7" viewBox="0 0 10 7"><path d="M0.300 0.300H9.700L5 6.700Z" fill="#757575"/></svg>
<div class="abs" style="left:320.5px;top:1121.7px;width:626.3px;height:71.6px;background:#fff;border:1px solid #d6d6d6;border-radius:4px"></div>
<svg class="ico" style="left:940px;top:1187px" width="5" height="5" viewBox="0 0 5 5"><path d="M4.500 1.500V4.500H1.500Z" fill="#555"/></svg>
<div class="abs" style="left:320.5px;top:1209.7px;width:626.3px;height:78px;background:#dcdce1;border:1.3px dashed #9c9ca0;border-radius:7px"></div>
<div class="t b" style="left:357px;top:1226px;line-height:21px;height:21px;font-size:15px;color:#1c1c1c">Stock</div>
<svg class="ico" style="left:405.7px;top:1230.7px" width="13" height="13" viewBox="0 0 512 512" ><path fill="#b9b9bd" d="M256 8C119.043 8 8 119.083 8 256c0 136.997 111.043 248 248 248s248-111.003 248-248C504 119.083 392.957 8 256 8zm0 110c23.196 0 42 18.804 42 42s-18.804 42-42 42-42-18.804-42-42 18.804-42 42-42zm56 254c0 6.627-5.373 12-12 12h-88c-6.627 0-12-5.373-12-12v-24c0-6.627 5.373-12 12-12h12v-64h-12c-6.627 0-12-5.373-12-12v-24c0-6.627 5.373-12 12-12h64c6.627 0 12 5.373 12 12v100h12c6.627 0 12 5.373 12 12v24z"/></svg><div class="t " style="left:424.3px;top:1223px;line-height:25px;height:25px;color:#222">: 0</div>
<div class="t b" style="left:470px;top:1226px;line-height:21px;height:21px;font-size:15px;color:#1c1c1c">Période vendu du</div>
<svg class="ico" style="left:604.5px;top:1230.7px" width="13" height="13" viewBox="0 0 512 512" ><path fill="#b9b9bd" d="M256 8C119.043 8 8 119.083 8 256c0 136.997 111.043 248 248 248s248-111.003 248-248C504 119.083 392.957 8 256 8zm0 110c23.196 0 42 18.804 42 42s-18.804 42-42 42-42-18.804-42-42 18.804-42 42-42zm56 254c0 6.627-5.373 12-12 12h-88c-6.627 0-12-5.373-12-12v-24c0-6.627 5.373-12 12-12h12v-64h-12c-6.627 0-12-5.373-12-12v-24c0-6.627 5.373-12 12-12h64c6.627 0 12 5.373 12 12v100h12c6.627 0 12 5.373 12 12v24z"/></svg><div class="t " style="left:622.3px;top:1223px;line-height:25px;height:25px;color:#222">:</div>
<div class="abs" style="left:631.2px;top:1219.2px;width:112.5px;height:34px;background:#fff;border-radius:4px"></div>
<div class="t " style="left:638.2px;top:1223px;line-height:25px;height:25px;font-size:18.3px;color:#111">23/07/2024</div>
<svg class="ico" style="left:745.5px;top:1230px" width="15" height="13.5" viewBox="0 0 15 13.5"><rect x="0" y="0" width="15" height="13.5" fill="#d6d3e4"/><path d="M0 13.500V0H15" fill="none" stroke="#9c9dcc" stroke-width="1.600"/><path d="M0 13.500H15V0" fill="none" stroke="#b4b4b8" stroke-width="1.600"/><rect x="1.30" y="1.40" width="2.3" height="2.7" fill="#fff"/><rect x="4.75" y="1.40" width="2.3" height="2.7" fill="#fff"/><rect x="8.20" y="1.40" width="2.3" height="2.7" fill="#fff"/><rect x="11.65" y="1.40" width="2.3" height="2.7" fill="#fff"/><rect x="1.30" y="5.30" width="2.3" height="2.7" fill="#fff"/><rect x="4.75" y="5.30" width="2.3" height="2.7" fill="#fff"/><rect x="8.20" y="5.30" width="2.3" height="2.7" fill="#fff"/><rect x="11.65" y="5.30" width="2.3" height="2.7" fill="#fff"/><rect x="1.30" y="9.20" width="2.3" height="2.7" fill="#fff"/><rect x="4.75" y="9.20" width="2.3" height="2.7" fill="#fff"/><rect x="8.20" y="9.20" width="2.3" height="2.7" fill="#fff"/><rect x="11.65" y="9.20" width="2.3" height="2.7" fill="#fff"/><rect x="4" y="4.400" width="4.200" height="4.200" fill="#fbe6fb" stroke="#94699f" stroke-width="1.200"/></svg>
<div class="t b" style="left:790px;top:1226px;line-height:21px;height:21px;font-size:15px;color:#1c1c1c">Qté vendu</div>
<div class="t " style="left:863.5px;top:1223px;line-height:25px;height:25px;color:#222">: 0</div>
<div class="t b" style="left:546.7px;top:1258px;line-height:21px;height:21px;font-size:15px;color:#1c1c1c">Qté à commander</div>
<div class="t " style="left:674.6px;top:1255px;line-height:25px;height:25px;color:#222">: 0</div>
<div class="t " style="left:320.5px;top:1311px;line-height:25px;height:25px;color:#1c1c1c">Si produit de type service à durée limitée : Du</div>
<div class="abs" style="left:698px;top:1307.5px;width:111.5px;height:33.7px;background:#fff;border-radius:4px;box-shadow:0 1px 1.5px rgba(0,0,0,.1)"></div>
<svg class="ico" style="left:812px;top:1318px" width="15" height="13.5" viewBox="0 0 15 13.5"><rect x="0" y="0" width="15" height="13.5" fill="#d6d3e4"/><path d="M0 13.500V0H15" fill="none" stroke="#9c9dcc" stroke-width="1.600"/><path d="M0 13.500H15V0" fill="none" stroke="#b4b4b8" stroke-width="1.600"/><rect x="1.30" y="1.40" width="2.3" height="2.7" fill="#fff"/><rect x="4.75" y="1.40" width="2.3" height="2.7" fill="#fff"/><rect x="8.20" y="1.40" width="2.3" height="2.7" fill="#fff"/><rect x="11.65" y="1.40" width="2.3" height="2.7" fill="#fff"/><rect x="1.30" y="5.30" width="2.3" height="2.7" fill="#fff"/><rect x="4.75" y="5.30" width="2.3" height="2.7" fill="#fff"/><rect x="8.20" y="5.30" width="2.3" height="2.7" fill="#fff"/><rect x="11.65" y="5.30" width="2.3" height="2.7" fill="#fff"/><rect x="1.30" y="9.20" width="2.3" height="2.7" fill="#fff"/><rect x="4.75" y="9.20" width="2.3" height="2.7" fill="#fff"/><rect x="8.20" y="9.20" width="2.3" height="2.7" fill="#fff"/><rect x="11.65" y="9.20" width="2.3" height="2.7" fill="#fff"/><rect x="4" y="4.400" width="4.200" height="4.200" fill="#fbe6fb" stroke="#94699f" stroke-width="1.200"/></svg>
<div class="t " style="left:835px;top:1312px;line-height:24px;height:24px;font-size:18px;color:#1c1c1c">au</div>
<div class="abs" style="left:860px;top:1307.5px;width:111.5px;height:33.7px;background:#fff;border-radius:4px;box-shadow:0 1px 1.5px rgba(0,0,0,.1)"></div>
<svg class="ico" style="left:975px;top:1318px" width="15" height="13.5" viewBox="0 0 15 13.5"><rect x="0" y="0" width="15" height="13.5" fill="#d6d3e4"/><path d="M0 13.500V0H15" fill="none" stroke="#9c9dcc" stroke-width="1.600"/><path d="M0 13.500H15V0" fill="none" stroke="#b4b4b8" stroke-width="1.600"/><rect x="1.30" y="1.40" width="2.3" height="2.7" fill="#fff"/><rect x="4.75" y="1.40" width="2.3" height="2.7" fill="#fff"/><rect x="8.20" y="1.40" width="2.3" height="2.7" fill="#fff"/><rect x="11.65" y="1.40" width="2.3" height="2.7" fill="#fff"/><rect x="1.30" y="5.30" width="2.3" height="2.7" fill="#fff"/><rect x="4.75" y="5.30" width="2.3" height="2.7" fill="#fff"/><rect x="8.20" y="5.30" width="2.3" height="2.7" fill="#fff"/><rect x="11.65" y="5.30" width="2.3" height="2.7" fill="#fff"/><rect x="1.30" y="9.20" width="2.3" height="2.7" fill="#fff"/><rect x="4.75" y="9.20" width="2.3" height="2.7" fill="#fff"/><rect x="8.20" y="9.20" width="2.3" height="2.7" fill="#fff"/><rect x="11.65" y="9.20" width="2.3" height="2.7" fill="#fff"/><rect x="4" y="4.400" width="4.200" height="4.200" fill="#fbe6fb" stroke="#94699f" stroke-width="1.200"/></svg>
<div class="abs" style="left:967px;top:1132.5px;width:169.20000000000005px;height:34.5px;background:#fff;border-radius:4px;box-shadow:0 1px 1.5px rgba(0,0,0,.1)"></div>
<div class="abs" style="left:1269.2px;top:1132.5px;width:98.79999999999995px;height:34.5px;background:#fff;border-radius:4px;box-shadow:0 1px 1.5px rgba(0,0,0,.1)"></div>
<div class="abs" style="left:1387.5px;top:1132.5px;width:98.0px;height:34.5px;background:#fff;border-radius:4px;box-shadow:0 1px 1.5px rgba(0,0,0,.1)"></div>
<div class="abs" style="left:1505px;top:1132.5px;width:70.5px;height:34.5px;background:#fff;border-radius:4px;box-shadow:0 1px 1.5px rgba(0,0,0,.1)"></div>
<div class="abs" style="left:1595.5px;top:1132.5px;width:60.299999999999955px;height:34.5px;background:#fff;border-radius:4px;box-shadow:0 1px 1.5px rgba(0,0,0,.1)"></div>
<div class="abs" style="left:1155.8px;top:1131.2px;width:93.7px;height:36.8px;background:#fff;border-radius:4px;box-shadow:0 1px 1.5px rgba(0,0,0,.1)"></div>
<div class="t " style="left:1163px;top:1138px;line-height:25px;height:25px;color:#111">20%</div>
<svg class="ico" style="left:1230px;top:1144px" width="16" height="13" viewBox="1230 1144 16 13"><path d="M1233.300 1148L1238.100 1152.800L1242.900 1148" fill="none" stroke="#111" stroke-width="2.400"/></svg>
<div class="t " style="right:350.5px;top:1137px;line-height:25px;height:25px;color:#111">1</div>
<div class="t " style="left:1656.8px;top:1139px;line-height:23px;height:23px;font-size:16.8px;color:#222">%</div>
<div class="abs" style="left:1719.2px;top:1128.7px;width:126.3px;height:44.4px;background:#9c78ab;border-radius:4px"></div>
<div class="t b" style="left:1738px;top:1138px;line-height:25px;height:25px;font-size:18.5px;color:#fff">AJOUTER</div>


<div id="bottom"></div>
<div id="circle"></div>
<div id="four">4</div>
</div>
</body>
</html>
